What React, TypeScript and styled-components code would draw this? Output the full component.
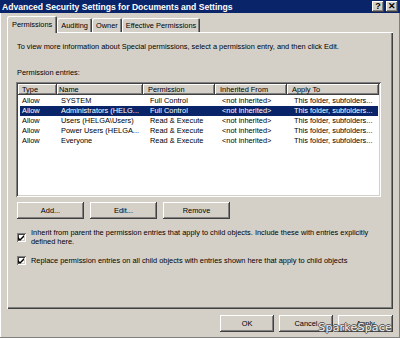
import React from 'react';
import styled, { createGlobalStyle } from 'styled-components';

const GlobalStyle = createGlobalStyle`
  html, body {
    margin: 0;
    padding: 0;
    background: #d4d0c8;
  }
  * {
    box-sizing: border-box;
  }
`;

const raised = `
  box-shadow: inset -1px -1px #404040, inset 1px 1px #ffffff,
    inset -2px -2px #808080, inset 2px 2px #d4d0c8;
`;

const Window = styled.div`
  position: relative;
  width: 400px;
  height: 338px;
  background: #d4d0c8;
  display: flex;
  flex-direction: column;
  font-family: 'Liberation Sans', Arial, sans-serif;
  font-size: 7.4px;
  color: #000;
  overflow: hidden;
  box-shadow: inset -1px -1px #808080, inset 1px 0 #ffffff;
`;

const TitleBar = styled.div`
  height: 13px;
  background: #0a246a;
  display: flex;
  align-items: center;
  padding: 0 2px;
  flex-shrink: 0;
`;

const Title = styled.div`
  flex: 1;
  color: #fff;
  font-weight: bold;
  font-size: 8.6px;
  white-space: nowrap;
`;

const CaptionButton = styled.div`
  width: 12px;
  height: 11px;
  background: #d4d0c8;
  ${raised}
  display: flex;
  align-items: center;
  justify-content: center;
  font-weight: bold;
  font-size: 9px;
  line-height: 1;
  margin-left: ${(p: { $gap?: number }) => p.$gap ?? 0}px;
`;

const Body = styled.div`
  flex: 1;
  display: flex;
  flex-direction: column;
  padding: 3px 7px 0 7px;
`;

const TabStrip = styled.div`
  display: flex;
  align-items: flex-end;
  height: 16px;
  padding-left: 2px;
  position: relative;
  z-index: 1;
`;

const Tab = styled.div<{ $active?: boolean }>`
  height: ${(p) => (p.$active ? 17 : 14)}px;
  margin-bottom: ${(p) => (p.$active ? -1 : 0)}px;
  padding: 0 ${(p) => (p.$active ? 5 : 4)}px;
  margin-left: ${(p) => (p.$active ? -2 : 0)}px;
  display: flex;
  align-items: center;
  background: #d4d0c8;
  border-top-left-radius: 2px;
  border-top-right-radius: 2px;
  box-shadow: inset 1px 1px #ffffff, inset -1px 0 #404040, inset -2px 0 #808080;
  white-space: nowrap;
`;

const Panel = styled.div`
  height: 277px;
  display: flex;
  flex-direction: column;
  padding: 0 10px 0 9px;
  box-shadow: inset 1px 1px #ffffff, inset -1px -1px #404040,
    inset -2px -2px #808080;
`;

const Line = styled.div<{ $top: number }>`
  margin-top: ${(p) => p.$top}px;
  margin-left: 1px;
  height: 10px;
  line-height: 10px;
  white-space: nowrap;
`;

const ListBox = styled.div`
  margin-top: 4px;
  height: 115px;
  width: 365px;
  background: #fff;
  padding: 2px;
  box-shadow: inset 1px 1px #808080, inset -1px -1px #ffffff,
    inset 2px 2px #404040, inset -2px -2px #d4d0c8;
`;

const columns = '39px 86px 72px 72px 92px';

const HeaderRow = styled.div`
  display: grid;
  grid-template-columns: ${columns};
  height: 11px;
`;

const HeaderCell = styled.div<{ $pad: number }>`
  background: #d4d0c8;
  ${raised}
  padding-left: ${(p) => p.$pad}px;
  line-height: 11px;
  white-space: nowrap;
  overflow: hidden;
`;

const Row = styled.div<{ $selected?: boolean }>`
  display: grid;
  grid-template-columns: ${columns};
  height: 10px;
  line-height: 10px;
  background: ${(p) => (p.$selected ? '#0a246a' : 'transparent')};
  color: ${(p) => (p.$selected ? '#fff' : '#000')};
  margin-left: 2px;
  margin-right: 1px;
`;

const FirstRow = styled.div`
  height: 1px;
`;

const Cell = styled.div<{ $pad: number }>`
  padding-left: ${(p) => p.$pad}px;
  white-space: nowrap;
  overflow: hidden;
`;

const ButtonRow = styled.div`
  display: flex;
  gap: 6px;
  margin-top: 5px;
  margin-left: 1px;
`;

const Button = styled.div<{ $w: number }>`
  width: ${(p) => p.$w}px;
  height: 17px;
  background: #d4d0c8;
  ${raised}
  display: flex;
  align-items: center;
  justify-content: center;
`;

const CheckRow = styled.div<{ $top: number }>`
  display: flex;
  align-items: center;
  margin-top: ${(p) => p.$top}px;
  margin-left: 1px;
`;

const CheckBox = styled.div`
  width: 9px;
  height: 9px;
  flex-shrink: 0;
  background: #fff;
  box-shadow: inset 1px 1px #808080, inset -1px -1px #ffffff,
    inset 2px 2px #404040, inset -2px -2px #d4d0c8;
  display: flex;
  align-items: center;
  justify-content: center;
`;

const CheckLabel = styled.div`
  margin-left: 5px;
  line-height: 9px;
`;

const Footer = styled.div`
  display: flex;
  justify-content: flex-end;
  gap: 5px;
  margin-top: 6px;
  padding-right: -1px;
`;

const Watermark = styled.div`
  position: absolute;
  right: 8px;
  bottom: 4px;
  font-family: 'DejaVu Sans', sans-serif;
  font-size: 11px;
  color: #f0f0f0;
  letter-spacing: 0.2px;
  text-shadow: -1px 0 #555, 1px 0 #555, 0 -1px #555, 0 1px #555;
`;

const Check = () => (
  <svg width="7" height="7" viewBox="0 0 7 7">
    <path d="M0 3 L2 5 L6 1 L6 3 L2 7 L0 5 Z" fill="#000" />
  </svg>
);

const entries = [
  ['Allow', 'SYSTEM', 'Full Control'],
  ['Allow', 'Administrators (HELG...', 'Full Control'],
  ['Allow', 'Users (HELGA\\Users)', 'Read & Execute'],
  ['Allow', 'Power Users (HELGA...', 'Read & Execute'],
  ['Allow', 'Everyone', 'Read & Execute'],
];

const pads = [4, 2, 5, 5, 5];

const App: React.FC = () => {
  return (
    <Window>
      <GlobalStyle />
      <TitleBar>
        <Title>Advanced Security Settings for Documents and Settings</Title>
        <CaptionButton>?</CaptionButton>
        <CaptionButton $gap={2}>✕</CaptionButton>
      </TitleBar>
      <Body>
        <TabStrip>
          <Tab $active>Permissions</Tab>
          <Tab>Auditing</Tab>
          <Tab>Owner</Tab>
          <Tab>Effective Permissions</Tab>
        </TabStrip>
        <Panel>
          <Line $top={10}>
            To view more information about Special permissions, select a permission entry, and then click Edit.
          </Line>
          <Line $top={16}>Permission entries:</Line>
          <ListBox>
            <HeaderRow>
              {['Type', 'Name', 'Permission', 'Inherited From', 'Apply To'].map((h, i) => (
                <HeaderCell key={h} $pad={pads[i]}>
                  {h}
                </HeaderCell>
              ))}
            </HeaderRow>
            <FirstRow />
            {entries.map((e, i) => (
              <Row key={e[1]} $selected={i === 1}>
                <Cell $pad={2}>{e[0]}</Cell>
                <Cell $pad={pads[1]}>{e[1]}</Cell>
                <Cell $pad={pads[2]}>{e[2]}</Cell>
                <Cell $pad={pads[3]}>&lt;not inherited&gt;</Cell>
                <Cell $pad={pads[4]}>This folder, subfolders...</Cell>
              </Row>
            ))}
          </ListBox>
          <ButtonRow>
            <Button $w={67}>Add...</Button>
            <Button $w={67}>Edit...</Button>
            <Button $w={67}>Remove</Button>
          </ButtonRow>
          <CheckRow $top={9}>
            <CheckBox>
              <Check />
            </CheckBox>
            <CheckLabel>
              Inherit from parent the permission entries that apply to child objects. Include these with entries explicitly
              <br />
              defined here.
            </CheckLabel>
          </CheckRow>
          <CheckRow $top={10}>
            <CheckBox>
              <Check />
            </CheckBox>
            <CheckLabel>Replace permission entries on all child objects with entries shown here that apply to child objects</CheckLabel>
          </CheckRow>
        </Panel>
        <Footer>
          <Button $w={54}>OK</Button>
          <Button $w={54}>Cancel</Button>
          <Button $w={55}>Apply</Button>
        </Footer>
      </Body>
      <Watermark>SparkeSpace</Watermark>
    </Window>
  );
};

export default App;
